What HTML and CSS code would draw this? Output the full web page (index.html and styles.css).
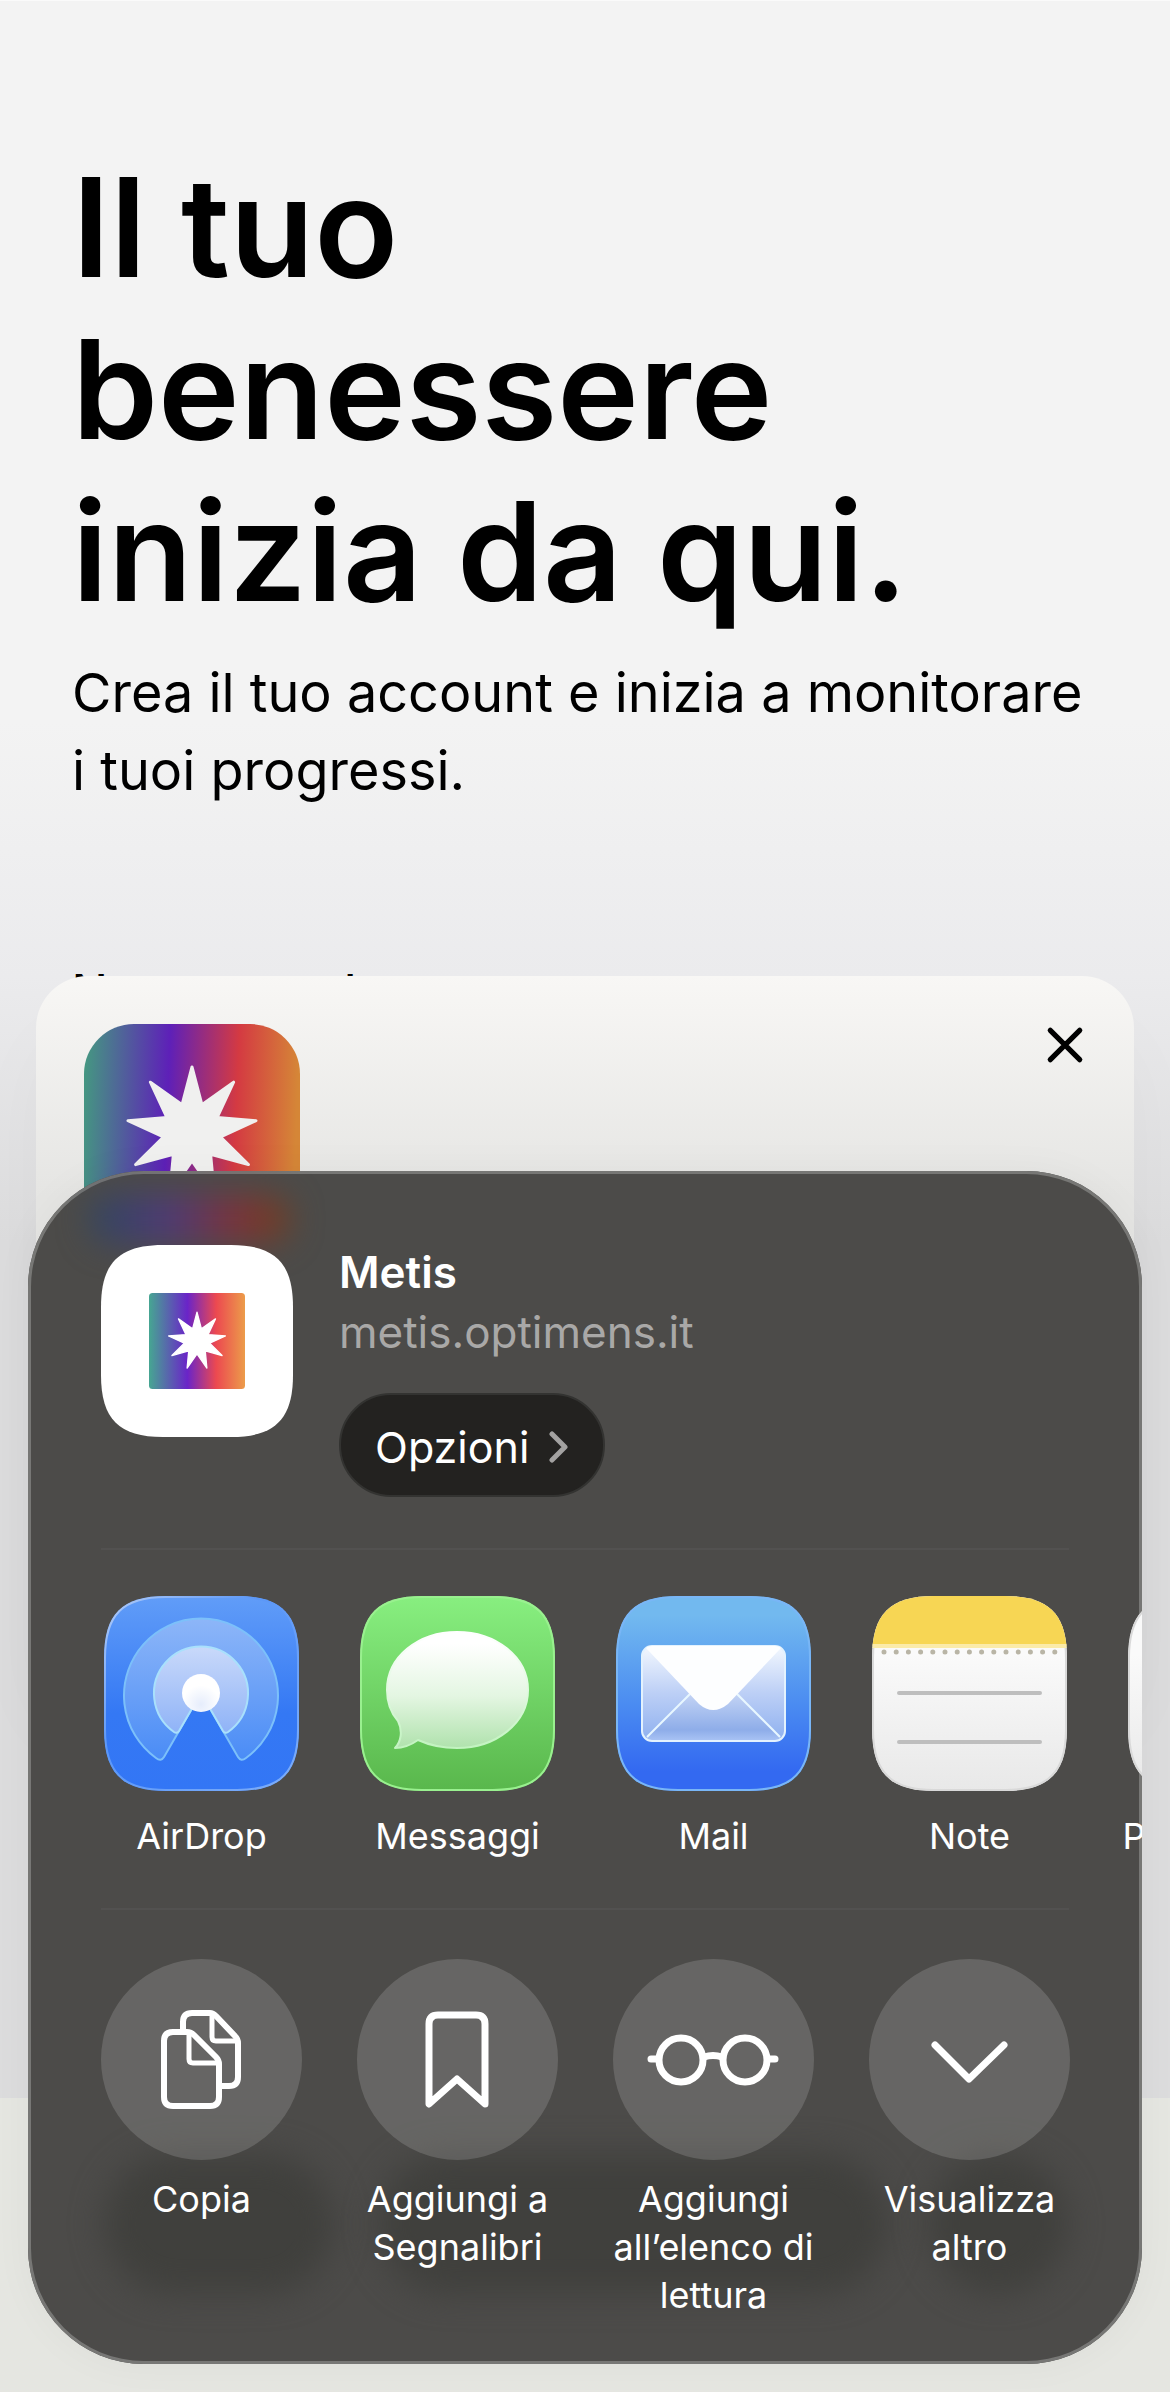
FILE: index.html
```html
<!DOCTYPE html>
<html lang="it">
<head>
  <meta charset="UTF-8">
  <meta name="viewport" content="width=device-width, initial-scale=1.0">
  <title>Metis</title>
  <link rel="stylesheet" href="styles.css">
</head>
<body>
  <main class="page">
    <h1>Il tuo<br>benessere<br>inizia da qui.</h1>
    <p class="intro">Crea il tuo account e inizia a monitorare i tuoi progressi.</p>
    <p class="field-label">Nome completo</p>
  </main>
  <div class="browser-bar"></div>

  <!-- Install card -->
  <section class="install-card">
    <svg class="install-logo" viewBox="0 0 216 216" role="img" aria-label="Metis">
      <defs>
        <linearGradient id="rainbow" x1="0" y1="0" x2="1" y2="0.04">
          <stop offset="0" stop-color="#449a80"/>
          <stop offset="0.4" stop-color="#5e20b8"/>
          <stop offset="0.72" stop-color="#d43a42"/>
          <stop offset="1" stop-color="#d58637"/>
        </linearGradient>
        <linearGradient id="rainbowBright" x1="0" y1="0" x2="1" y2="0">
          <stop offset="0" stop-color="#46a692"/>
          <stop offset="0.4" stop-color="#6a24c8"/>
          <stop offset="0.7" stop-color="#ec4950"/>
          <stop offset="1" stop-color="#ec9c4a"/>
        </linearGradient>
        <path id="star" stroke-width="3" stroke-linejoin="round" d="M108 43 117.9 80.7 149.6 58.2 133.1 93.5 172 96.7 136.6 113 164.4 140.6 126.6 130.2 130.2 169 108 137 85.8 169 89.4 130.2 51.6 140.6 79.4 113 44 96.7 82.9 93.5 66.4 58.2 98.1 80.7Z"/>
      </defs>
      <rect width="216" height="216" rx="50" fill="url(#rainbow)"/>
      <use href="#star" fill="#f0f0ef" stroke="#f0f0ef"/>
    </svg>
    <button class="close-btn" aria-label="Chiudi">
      <svg viewBox="0 0 40 40"><path d="M6 6 34 34M34 6 6 34"/></svg>
    </button>
  </section>

  <!-- Share sheet -->
  <section class="share-sheet">
    <div class="glow glow-logo"></div>
    <div class="glow glow-left"></div>
    <div class="glow glow-middle"></div>
    <div class="glow glow-right"></div>

    <header class="share-header">
      <svg class="site-icon" viewBox="0 0 192 192" aria-hidden="true">
        <path fill="#fff" d="M0 62C0 18 18 0 62 0H130C174 0 192 18 192 62V130C192 174 174 192 130 192H62C18 192 0 174 0 130Z"/>
        <svg x="48" y="48" width="96" height="96" viewBox="0 0 216 216">
          <rect width="216" height="216" rx="8" fill="url(#rainbowBright)"/>
          <use href="#star" fill="#fff" stroke="#fff"/>
        </svg>
      </svg>
      <div class="site-info">
        <h2>Metis</h2>
        <p>metis.optimens.it</p>
        <button class="options-btn">Opzioni
          <svg viewBox="0 0 20 32"><path d="M3 3 16 16 3 29"/></svg>
        </button>
      </div>
    </header>

    <div class="row apps">
      <button class="item">
        <svg class="app-icon" viewBox="0 0 195 195">
          <defs>
            <path id="tile" d="M0 62C0 18 18 0 62 0H133C177 0 195 18 195 62V133C195 177 177 195 133 195H62C18 195 0 177 0 133Z"/>
            <clipPath id="tileClip"><use href="#tile"/></clipPath>
            <linearGradient id="airBg" x2="0" y2="1">
              <stop offset="0" stop-color="#619df8"/>
              <stop offset="0.6" stop-color="#3478f4"/>
              <stop offset="1" stop-color="#3376f5"/>
            </linearGradient>
            <linearGradient id="airOuter" x2="0" y2="1">
              <stop offset="0" stop-color="#8db6f8"/>
              <stop offset="1" stop-color="#4a8cf6"/>
            </linearGradient>
            <linearGradient id="airInner" x2="0" y2="1">
              <stop offset="0" stop-color="#c9d9fa"/>
              <stop offset="1" stop-color="#8fb3f7"/>
            </linearGradient>
            <radialGradient id="airDot" cy="0.8">
              <stop offset="0" stop-color="#e6edfc"/>
              <stop offset="1" stop-color="#fff"/>
            </radialGradient>
            <linearGradient id="rimBlue" x2="1" y2="1">
              <stop offset="0" stop-color="#b4cdf8"/>
              <stop offset="0.4" stop-color="#5b97f7"/>
              <stop offset="1" stop-color="#7eaefa"/>
            </linearGradient>
          </defs>
          <g clip-path="url(#tileClip)">
            <use href="#tile" fill="url(#airBg)" stroke="url(#rimBlue)" stroke-width="4"/>
          </g>
          <path d="M97 97 60 161Q57 166 52 162A77 77 0 1 1 142 162Q137 166 134 161Z" fill="url(#airOuter)" stroke="#7cc0fa" stroke-width="2"/>
          <path d="M97 97 75 135Q73 138 70 136A47 47 0 1 1 124 136Q121 138 119 135Z" fill="url(#airInner)" stroke="#a9e0fc" stroke-width="2"/>
          <circle cx="97" cy="97" r="19" fill="url(#airDot)"/>
        </svg>
        <span>AirDrop</span>
      </button>
      <button class="item">
        <svg class="app-icon" viewBox="0 0 195 195">
          <defs>
            <linearGradient id="msgBg" x2="0" y2="1">
              <stop offset="0" stop-color="#88ef80"/>
              <stop offset="1" stop-color="#59b74c"/>
            </linearGradient>
            <linearGradient id="bubble" x2="0" y2="1">
              <stop offset="0.1" stop-color="#fff"/>
              <stop offset="0.55" stop-color="#e4f6e2"/>
              <stop offset="1" stop-color="#b0e2ad"/>
            </linearGradient>
            <linearGradient id="bubbleRim" x2="0" y2="1">
              <stop offset="0" stop-color="#fff"/>
              <stop offset="1" stop-color="#c2f3c0"/>
            </linearGradient>
          </defs>
          <g clip-path="url(#tileClip)">
            <use href="#tile" fill="url(#msgBg)" stroke="#99f08f" stroke-width="4"/>
          </g>
          <path d="M97 36C136 36 168 61 168 94S136 152 97 152C82 152 69 149 58 144C51 149 43 152 35 152C41 146 43 135 38 125C30 116 27 106 27 94C27 61 58 36 97 36Z" fill="url(#bubble)" stroke="url(#bubbleRim)" stroke-width="2" stroke-linejoin="round"/>
        </svg>
        <span>Messaggi</span>
      </button>
      <button class="item">
        <svg class="app-icon" viewBox="0 0 195 195">
          <defs>
            <linearGradient id="mailBg" x2="0" y2="1">
              <stop offset="0.1" stop-color="#72b9ef"/>
              <stop offset="0.55" stop-color="#4b8cf1"/>
              <stop offset="0.9" stop-color="#3369f1"/>
            </linearGradient>
            <linearGradient id="envelope" x2="0" y2="1">
              <stop offset="0" stop-color="#f3f8fe"/>
              <stop offset="0.5" stop-color="#bccff6"/>
              <stop offset="1" stop-color="#8eb0ef"/>
            </linearGradient>
            <linearGradient id="fold" x2="0" y2="1">
              <stop offset="0" stop-color="#cfdcf7"/>
              <stop offset="0.8" stop-color="#8eade9"/>
              <stop offset="1" stop-color="#aac4f5"/>
            </linearGradient>
          </defs>
          <g clip-path="url(#tileClip)">
            <use href="#tile" fill="url(#mailBg)" stroke="#79b6f6" stroke-width="4"/>
          </g>
          <rect x="26" y="50" width="143" height="95" rx="10" fill="url(#envelope)"/>
          <path d="M30 142 80 90H116L165 142Q163 145 158 145H36Q32 145 30 142Z" fill="url(#fold)"/>
          <path d="M31 141 74 98M164 141 121 98" stroke="#e8f7ff" stroke-width="2"/>
          <rect x="26" y="50" width="143" height="95" rx="10" fill="none" stroke="#e3f2fe" stroke-width="2"/>
          <path d="M30 52Q32 50 36 50H159Q163 50 165 52L112 108Q97 120 83 108Z" fill="#fdfeff"/>
        </svg>
        <span>Mail</span>
      </button>
      <button class="item">
        <svg class="app-icon" viewBox="0 0 195 195">
          <defs>
            <linearGradient id="paper" x2="0" y2="1">
              <stop offset="0.3" stop-color="#fafafa"/>
              <stop offset="1" stop-color="#e8e8e8"/>
            </linearGradient>
          </defs>
          <g clip-path="url(#tileClip)">
            <use href="#tile" fill="url(#paper)" stroke="#d9d9d9" stroke-width="4"/>
            <path d="M0 0H195V50H0Z" fill="#f7d654"/>
            <path d="M0 50H195" stroke="#fbeba8" stroke-width="4"/>
          </g>
          <path d="M12 56H184" stroke="#b9b5a6" stroke-width="5" stroke-linecap="round" stroke-dasharray="0 12.2"/>
          <path d="M27 97H168M27 146H168" stroke="#bebebe" stroke-width="4" stroke-linecap="round"/>
        </svg>
        <span>Note</span>
      </button>
      <button class="item">
        <svg class="app-icon" viewBox="0 0 195 195">
          <g clip-path="url(#tileClip)">
            <use href="#tile" fill="url(#paper)" stroke="#d9d9d9" stroke-width="4"/>
          </g>
        </svg>
        <span>Promemoria</span>
      </button>
    </div>

    <div class="row actions">
      <button class="item">
        <svg class="action-icon" viewBox="0 0 201 201">
          <path d="M82 73V63Q82 54 91 54H109Q112 54 115 57L134 77Q137 80 137 84V118Q137 127 128 127H119"/>
          <path class="thin" d="M111 55V78Q111 82 115 82H136"/>
          <path d="M72 73H86Q90 73 93 76L115 98Q118 101 118 105V138Q118 147 109 147H72Q63 147 63 138V82Q63 73 72 73Z"/>
          <path class="thin" d="M88 74V100Q88 104 92 104H117"/>
        </svg>
        <span>Copia</span>
      </button>
      <button class="item">
        <svg class="action-icon" viewBox="0 0 201 201">
          <path class="thick" d="M81 56H119Q128 56 128 65V145L100 120 72 145V65Q72 56 81 56Z"/>
        </svg>
        <span>Aggiungi a Segnalibri</span>
      </button>
      <button class="item">
        <svg class="action-icon" viewBox="0 0 201 201">
          <circle class="thick" cx="68" cy="101" r="22"/>
          <circle class="thick" cx="132" cy="101" r="22"/>
          <path class="thick" d="M91 98Q100 95 109 98M45 100H38M155 100H162"/>
        </svg>
        <span>Aggiungi all’elenco di lettura</span>
      </button>
      <button class="item">
        <svg class="action-icon" viewBox="0 0 201 201">
          <path class="thick" d="M66 86 100 120 135 86"/>
        </svg>
        <span>Visualizza altro</span>
      </button>
    </div>
  </section>
</body>
</html>
```

FILE: styles.css
```css
* {
  box-sizing: border-box;
}
body {
  margin: 0;
  position: relative;
  min-height: 100vh;
  display: flex;
  flex-direction: column;
  overflow: hidden;
  font-family: Inter, 'Liberation Sans', sans-serif;
  background: #dcdcdd;
}
h1, h2, p {
  margin: 0;
}
button {
  border: none;
  padding: 0;
  background: none;
  color: inherit;
  font: inherit;
  cursor: pointer;
}
svg {
  display: block;
}
.page {
  flex: 1;
  padding: 145px 72px 0;
  border-top: 1px solid #fafafa;
  color: #000;
  background: linear-gradient(#f3f3f3 0, #f3f3f3 720px, #ebebed 976px, #dcdcdd 1240px);
}
.page h1 {
  font-size: 138px;
  line-height: 162px;
  font-weight: 600;
}
.intro {
  margin-top: 22px;
  font-size: 54px;
  line-height: 78px;
}
.field-label {
  margin-top: 152px;
  font-size: 47px;
  line-height: 58px;
  font-weight: 500;
}
.browser-bar {
  height: 294px;
  background: #e5e6e1;
}

/* install card */
.install-card {
  position: absolute;
  top: 976px;
  left: 36px;
  right: 36px;
  height: 700px;
  padding: 48px;
  display: flex;
  justify-content: space-between;
  align-items: flex-start;
  border-radius: 52px;
  background: linear-gradient(#f8f7f5, #e5e5e3 220px);
  box-shadow: 0 60px 80px rgba(0, 0, 0, 0.03);
}
.install-logo {
  width: 216px;
  height: 216px;
}
.close-btn svg {
  width: 42px;
  height: 42px;
  fill: none;
  stroke: #000;
  stroke-width: 5;
  stroke-linecap: round;
}

/* share sheet */
.share-sheet {
  position: absolute;
  left: 28px;
  right: 28px;
  bottom: 28px;
  padding: 74px 0 44px 73px;
  overflow: hidden;
  border-radius: 116px;
  color: #fff;
  background: #4c4b49;
  box-shadow: inset 0 0 0 3px #777775, 0 0 40px rgba(0, 0, 0, 0.04);
}
.share-header,
.row {
  position: relative;
}
.share-header {
  display: flex;
  gap: 46px;
  margin-right: 73px;
  padding-bottom: 51px;
  border-bottom: 2px solid #525150;
}
.site-icon {
  width: 192px;
  height: 192px;
}
.site-info {
  margin-top: -3px;
}
.site-info h2 {
  font-size: 44px;
  line-height: 60px;
  font-weight: 600;
}
.site-info p {
  font-size: 44px;
  line-height: 60px;
  color: #a9a8a7;
}
.options-btn {
  display: flex;
  align-items: center;
  gap: 20px;
  height: 104px;
  margin-top: 31px;
  padding: 4px 34px 0;
  border: 2px solid #333331;
  border-radius: 52px;
  background: #232220;
  font-size: 43px;
}
.options-btn svg {
  width: 20px;
  height: 32px;
  fill: none;
  stroke: #a3a2a1;
  stroke-width: 5;
  stroke-linecap: round;
  stroke-linejoin: round;
}
.row {
  display: flex;
  align-items: flex-start;
  gap: 55px;
}
.apps {
  padding: 46px 0 50px;
}
.apps::after {
  content: "";
  position: absolute;
  left: 0;
  right: 73px;
  bottom: 0;
  border-bottom: 2px solid #525150;
}
.actions {
  padding: 49px 0 1px;
}
.item {
  flex: 0 0 201px;
  display: flex;
  flex-direction: column;
  align-items: center;
  font-size: 36px;
  line-height: 48px;
}
.item span {
  margin: 0 -14px;
}
.app-icon {
  width: 195px;
  height: 195px;
  margin-bottom: 21px;
}
.action-icon {
  width: 201px;
  height: 201px;
  margin-bottom: 15px;
  border-radius: 50%;
  background: rgba(255, 255, 255, 0.15);
  fill: none;
  stroke: #fff;
  stroke-width: 6;
  stroke-linecap: round;
  stroke-linejoin: round;
}
.action-icon .thin {
  stroke-width: 5;
}
.action-icon .thick {
  stroke-width: 7;
}

/* what shows through the dark glass */
.glow {
  position: absolute;
  border-radius: 70px;
  background: #40403d;
  filter: blur(16px);
}
.glow-logo {
  top: 24px;
  left: 62px;
  width: 200px;
  height: 48px;
  border-radius: 24px;
  background: linear-gradient(to right, #2f4760, #4f3a78 40%, #7c333c 72%, #70401e);
}
.glow-left {
  left: 76px;
  bottom: 70px;
  width: 230px;
  height: 140px;
}
.glow-middle {
  left: 350px;
  bottom: 70px;
  width: 510px;
  height: 140px;
}
.glow-right {
  left: 900px;
  bottom: 70px;
  width: 140px;
  height: 140px;
}
```
